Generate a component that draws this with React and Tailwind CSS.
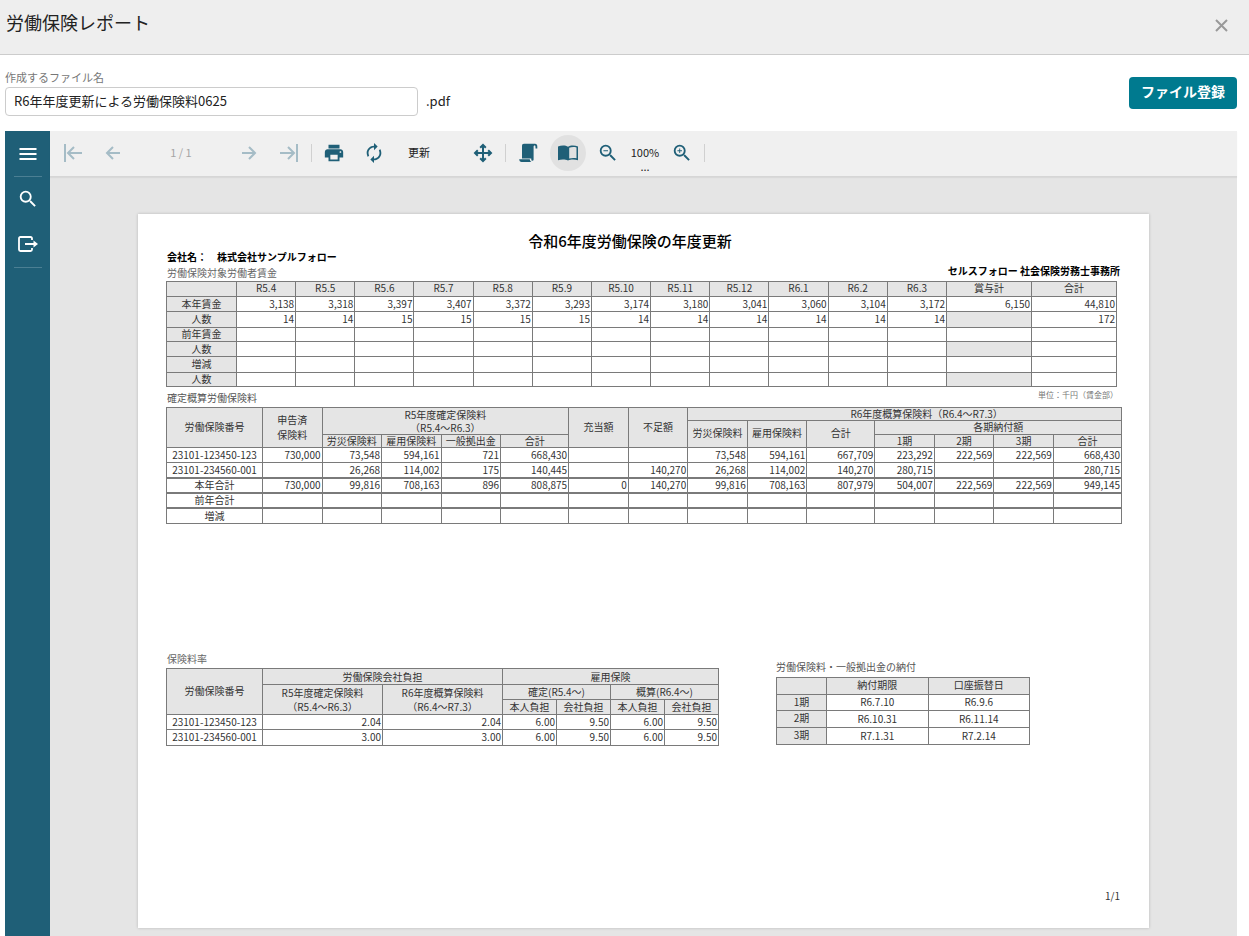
import { MdAutorenew, MdPrint, MdSearch, MdZoomIn, MdZoomOut } from "react-icons/md";

const months = ["R5.4", "R5.5", "R5.6", "R5.7", "R5.8", "R5.9", "R5.10", "R5.11", "R5.12", "R6.1", "R6.2", "R6.3"];

const wageRows = [
  {
    label: "本年賃金",
    height: "h-[15px]",
    values: ["3,138", "3,318", "3,397", "3,407", "3,372", "3,293", "3,174", "3,180", "3,041", "3,060", "3,104", "3,172", "6,150", "44,810"],
  },
  {
    label: "人数",
    height: "h-4",
    noBonus: true,
    values: ["14", "14", "15", "15", "15", "15", "14", "14", "14", "14", "14", "14", "", "172"],
  },
  { label: "前年賃金", height: "h-[14px]", values: Array(14).fill("") },
  { label: "人数", height: "h-[15px]", noBonus: true, values: Array(14).fill("") },
  { label: "増減", height: "h-4", values: Array(14).fill("") },
  { label: "人数", height: "h-[14px]", noBonus: true, values: Array(14).fill("") },
];

const premiumRows = [
  {
    label: "23101-123450-123",
    values: ["730,000", "73,548", "594,161", "721", "668,430", "", "", "73,548", "594,161", "667,709", "223,292", "222,569", "222,569", "668,430"],
  },
  {
    label: "23101-234560-001",
    thick: true,
    values: ["", "26,268", "114,002", "175", "140,445", "", "140,270", "26,268", "114,002", "140,270", "280,715", "", "", "280,715"],
  },
  {
    label: "本年合計",
    thick: true,
    values: ["730,000", "99,816", "708,163", "896", "808,875", "0", "140,270", "99,816", "708,163", "807,979", "504,007", "222,569", "222,569", "949,145"],
  },
  { label: "前年合計", thick: true, values: Array(14).fill("") },
  { label: "増減", values: Array(14).fill("") },
];

const rateRows = [
  { label: "23101-123450-123", height: "h-[15px]", values: ["2.04", "2.04", "6.00", "9.50", "6.00", "9.50"] },
  { label: "23101-234560-001", height: "h-4", values: ["3.00", "3.00", "6.00", "9.50", "6.00", "9.50"] },
];

const paymentRows = [
  { term: "1期", height: "h-4", due: "R6.7.10", debit: "R6.9.6" },
  { term: "2期", height: "h-[17px]", due: "R6.10.31", debit: "R6.11.14" },
  { term: "3期", height: "h-[17px]", due: "R7.1.31", debit: "R7.2.14" },
];

const StrokeIcon = ({ size, d, width = 2 }) => (
  <svg width={size} height={size} viewBox="0 0 20 20" fill="none" stroke="currentColor" strokeWidth={width}>
    <path d={d} />
  </svg>
);

const ScriptIcon = () => (
  <svg width="20" height="20" viewBox="0 0 20 20" fill="currentColor">
    <path d="M6 .8h11C18.500.8 19.300 2 19.300 3.400V5.500h-1.800V4c0-.9-.4-1.400-.9-1.400s-1 .5-1 1.400v12.600c0 .8-.5 1.200-1.100 1.200-.7 0-1.200-.5-1.200-1.300v-1.100H4V3C4 1.500 4.700.8 6 .8z" />
    <path d="M1.200 16.200h10.600c0 1.200.6 2.200 1.600 2.800H3.600c-1.400 0-2.400-1.200-2.400-2.800z" />
  </svg>
);

const BookIcon = () => (
  <svg width="20" height="16" viewBox="0 0 20 16" fill="currentColor">
    <path d="M0 1.500C3 .2 7.500 0 10 1.700V15.600C7.500 14.200 3 14.200 0 15.300z" />
    <path
      fillRule="evenodd"
      d="M10 1.700C12.500 0 17 .2 20 1.500V15.300c-3-1.100-7.500-1.100-10 .3zM11.200 2.700v10.900c2.200-.8 5.100-.8 7.300-.3V2.500c-2.200-.7-5.100-.6-7.300.2z"
    />
  </svg>
);

const ToolButton = ({ label, disabled, active, children }) => (
  <button
    type="button"
    aria-label={label}
    disabled={disabled}
    className={`flex size-9 shrink-0 items-center justify-center rounded-full ${
      disabled ? "text-[#a5bcc6]" : "text-[#1f5f77]"
    } ${active ? "bg-[#e1e1e1]" : ""}`}
  >
    {children}
  </button>
);

const Separator = () => <span className="h-[18px] w-px shrink-0 bg-[#d0d0d0]" />;

const Head = ({ className = "", ...props }) => (
  <th className={`border-r border-b border-[#7a7a7a] bg-[#e5e5e5] p-0 font-normal ${className}`} {...props} />
);

const Cell = ({ className = "", center, thick, ...props }) => (
  <td
    className={`border-r border-[#7a7a7a] p-0 pb-px ${center ? "text-center" : "pr-px text-right"} ${
      thick ? "border-b-2" : "border-b"
    } ${className}`}
    {...props}
  />
);

const Table = ({ className = "", ...props }) => (
  <table
    className={`table-fixed border-separate border-spacing-0 border-t border-l border-[#7a7a7a] leading-3 ${className}`}
    {...props}
  />
);

const WageTable = () => (
  <Table className="w-[951px]" aria-label="労働保険対象労働者賃金">
    <colgroup>
      <col className="w-[70px]" />
      <col span={12} />
      <col span={2} className="w-[85px]" />
    </colgroup>
    <thead>
      <tr className="h-[15px]">
        <Head />
        {months.map((month) => (
          <Head key={month} className="pb-0.5">
            {month}
          </Head>
        ))}
        <Head className="pb-0.5">賞与計</Head>
        <Head className="pb-0.5">合計</Head>
      </tr>
    </thead>
    <tbody>
      {wageRows.map((row, i) => (
        <tr key={i} className={row.height}>
          <Head scope="row" className="pb-px">
            {row.label}
          </Head>
          {row.values.map((value, j) => (
            <Cell key={j} className={row.noBonus && j === 12 ? "bg-[#e5e5e5]" : ""}>
              {value}
            </Cell>
          ))}
        </tr>
      ))}
    </tbody>
  </Table>
);

const PremiumTable = () => (
  <Table className="w-full" aria-label="確定概算労働保険料">
    <colgroup>
      <col className="w-24" />
      <col span={4} />
      <col className="w-[68px]" />
      <col span={4} />
      <col className="w-[68px]" />
      <col span={3} />
      <col className="w-[68px]" />
    </colgroup>
    <thead>
      <tr className="h-[13px]">
        <Head rowSpan={3} className="pb-0.5">
          労働保険番号
        </Head>
        <Head rowSpan={3} className="pb-0.5 leading-[15px]">
          申告済
          <br />
          保険料
        </Head>
        <Head rowSpan={2} colSpan={4} className="leading-[13px]">
          R5年度確定保険料
          <br />
          （R5.4～R6.3）
        </Head>
        <Head rowSpan={3} className="pb-0.5">
          充当額
        </Head>
        <Head rowSpan={3} className="pb-0.5">
          不足額
        </Head>
        <Head colSpan={7} className="pl-11">
          R6年度概算保険料（R6.4～R7.3）
        </Head>
      </tr>
      <tr className="h-[14px]">
        <Head rowSpan={2} className="pb-0.5">
          労災保険料
        </Head>
        <Head rowSpan={2} className="pb-0.5">
          雇用保険料
        </Head>
        <Head rowSpan={2} className="pb-0.5">
          合計
        </Head>
        <Head colSpan={4} className="pb-px">
          各期納付額
        </Head>
      </tr>
      <tr className="h-[13px]">
        <Head>労災保険料</Head>
        <Head>雇用保険料</Head>
        <Head>一般拠出金</Head>
        <Head>合計</Head>
        <Head>1期</Head>
        <Head>2期</Head>
        <Head>3期</Head>
        <Head>合計</Head>
      </tr>
    </thead>
    <tbody>
      {premiumRows.map((row, i) => (
        <tr key={row.label} className={i === 1 ? "h-4" : "h-[15px]"}>
          <Cell center thick={row.thick}>
            {row.label}
          </Cell>
          {row.values.map((value, j) => (
            <Cell key={j} thick={row.thick}>
              {value}
            </Cell>
          ))}
        </tr>
      ))}
    </tbody>
  </Table>
);

const RateTable = () => (
  <Table className="w-[553px]" aria-label="保険料率">
    <colgroup>
      <col className="w-24" />
      <col span={2} className="w-[120px]" />
      <col span={4} />
    </colgroup>
    <thead>
      <tr className="h-4">
        <Head rowSpan={3} className="pb-0.5">
          労働保険番号
        </Head>
        <Head colSpan={2}>労働保険会社負担</Head>
        <Head colSpan={4}>雇用保険</Head>
      </tr>
      <tr className="h-[15px]">
        <Head rowSpan={2} className="leading-[14px]">
          R5年度確定保険料
          <br />
          （R5.4～R6.3）
        </Head>
        <Head rowSpan={2} className="leading-[14px]">
          R6年度概算保険料
          <br />
          （R6.4～R7.3）
        </Head>
        <Head colSpan={2}>確定(R5.4～)</Head>
        <Head colSpan={2}>概算(R6.4～)</Head>
      </tr>
      <tr className="h-[15px]">
        <Head>本人負担</Head>
        <Head>会社負担</Head>
        <Head>本人負担</Head>
        <Head>会社負担</Head>
      </tr>
    </thead>
    <tbody>
      {rateRows.map((row) => (
        <tr key={row.label} className={row.height}>
          <Cell center>{row.label}</Cell>
          {row.values.map((value, j) => (
            <Cell key={j}>{value}</Cell>
          ))}
        </tr>
      ))}
    </tbody>
  </Table>
);

const PaymentTable = () => (
  <Table className="w-[254px]" aria-label="労働保険料・一般拠出金の納付">
    <colgroup>
      <col className="w-[50px]" />
      <col span={2} />
    </colgroup>
    <thead>
      <tr className="h-[17px]">
        <Head />
        <Head className="pb-0.5">納付期限</Head>
        <Head className="pb-0.5">口座振替日</Head>
      </tr>
    </thead>
    <tbody>
      {paymentRows.map((row) => (
        <tr key={row.term} className={row.height}>
          <Head scope="row" className="pb-0.5">
            {row.term}
          </Head>
          <Cell center>{row.due}</Cell>
          <Cell center>{row.debit}</Cell>
        </tr>
      ))}
    </tbody>
  </Table>
);

const ReportPage = () => (
  <article className="mx-auto flex min-h-[714px] w-[1011px] flex-col bg-white pt-[18px] pr-[27px] pb-6 pl-7 text-[10px] text-[#333] shadow-[0_0_3px_rgba(0,0,0,0.2)]">
    <h2 className="pr-7 text-center text-[15px] leading-[18px] font-medium text-black">令和6年度労働保険の年度更新</h2>
    <p className="pb-px pl-px leading-[14px] font-bold text-black">会社名：　株式会社サンプルフォロー</p>
    <div className="flex items-start justify-between pr-0.5 pl-px">
      <p className="leading-4 text-[#666]">労働保険対象労働者賃金</p>
      <p className="leading-3 font-bold text-black">セルスフォロー 社会保険労務士事務所</p>
    </div>
    <WageTable />

    <div className="flex h-5 items-center justify-between pl-px">
      <p className="text-[#555]">確定概算労働保険料</p>
      <p className="self-start pr-1 text-[8px] leading-4 text-[#777]">単位：千円（賃金部）</p>
    </div>
    <PremiumTable />

    <div className="mt-[126px] flex items-start gap-[57px]">
      <section>
        <p className="pl-px leading-[18px] text-[#666]">保険料率</p>
        <RateTable />
      </section>
      <section className="pt-[7px]">
        <p className="leading-5 text-[#555]">労働保険料・一般拠出金の納付</p>
        <PaymentTable />
      </section>
    </div>

    <p className="mt-auto pr-0.5 text-right leading-4">1/1</p>
  </article>
);

const Toolbar = () => (
  <div
    role="toolbar"
    aria-label="レポート操作"
    className="flex h-[46px] shrink-0 items-center gap-1 border-b border-[#d6d6d6] bg-[#f0f0f0] pb-0.5 pl-[5px] text-[11px] text-[#222] shadow-[0_1px_1px_rgba(0,0,0,0.05)]"
  >
    <ToolButton label="最初のページ" disabled>
      <StrokeIcon size={20} d="M2 1v18M19 10H5M11 4l-6 6 6 6" />
    </ToolButton>
    <ToolButton label="前のページ" disabled>
      <StrokeIcon size={20} d="M17 10H4M10 4l-6 6 6 6" />
    </ToolButton>
    <span className="w-[92px] text-center text-[#a5a5a5]">1 / 1</span>
    <ToolButton label="次のページ" disabled>
      <StrokeIcon size={20} d="M3 10h13M10 4l6 6-6 6" />
    </ToolButton>
    <ToolButton label="最後のページ" disabled>
      <StrokeIcon size={20} d="M18 1v18M1 10h14M9 4l6 6-6 6" />
    </ToolButton>
    <Separator />
    <ToolButton label="印刷">
      <MdPrint size={22} />
    </ToolButton>
    <ToolButton label="再読み込み">
      <MdAutorenew size={22} />
    </ToolButton>
    <button type="button" className="w-[65px] px-3 text-left">
      更新
    </button>
    <ToolButton label="移動">
      <StrokeIcon
        size={20}
        d="M10 2v16M2 10h16M7.200 4.800L10 2l2.800 2.800M7.200 15.200L10 18l2.800-2.800M4.800 7.200L2 10l2.800 2.800M15.200 7.200L18 10l-2.800 2.800"
      />
    </ToolButton>
    <Separator />
    <ToolButton label="連続表示">
      <ScriptIcon />
    </ToolButton>
    <ToolButton label="ページ表示" active>
      <BookIcon />
    </ToolButton>
    <ToolButton label="縮小">
      <MdZoomOut size={22} />
    </ToolButton>
    <button type="button" className="flex w-[30px] flex-col items-center pt-3 leading-[14px]">
      <span>100%</span>
      <span>...</span>
    </button>
    <ToolButton label="拡大">
      <MdZoomIn size={22} />
    </ToolButton>
    <Separator />
  </div>
);

const SideMenu = () => (
  <nav className="flex w-[45px] shrink-0 flex-col items-center bg-[#1f5f77] text-white">
    <button type="button" aria-label="メニュー" className="flex h-[45px] w-full items-center justify-center">
      <StrokeIcon size={20} d="M1.500 5h17M1.500 10h17M1.500 15h17" />
    </button>
    <span className="h-px w-7 bg-[#4b7f93]" />
    <button type="button" aria-label="検索" className="flex h-[45px] w-full items-center justify-center pb-0.5">
      <MdSearch size={22} />
    </button>
    <button type="button" aria-label="エクスポート" className="flex h-[45px] w-full items-center justify-center pb-0.5">
      <svg width="20" height="20" viewBox="0 0 20 20" fill="none" stroke="currentColor" strokeWidth="1.800">
        <path d="M14 6V4.500Q14 3 12.500 3h-10Q1 3 1 4.500v11Q1 17 2.500 17h10q1.500 0 1.500-1.500V14M7 10h9" />
        <path d="M15.500 6.500L20 10l-4.500 3.500z" fill="currentColor" stroke="none" />
      </svg>
    </button>
    <span className="h-px w-7 bg-[#4b7f93]" />
  </nav>
);

export default function App() {
  return (
    <div
      lang="ja"
      className="flex min-h-screen flex-col bg-white font-['Noto_Sans_CJK_JP','Noto_Sans',sans-serif] text-[#222]"
    >
      <header className="flex h-[55px] shrink-0 items-center justify-between border-b border-[#ccc] bg-[#eee] pr-5 pl-[6px]">
        <h1 className="pb-2.5 text-lg">労働保険レポート</h1>
        <button type="button" aria-label="閉じる" className="pb-1 text-[#999]">
          <svg width="15" height="15" viewBox="0 0 15 15" fill="none" stroke="currentColor" strokeWidth="2">
            <path d="M2 2l11 11M13 2L2 13" />
          </svg>
        </button>
      </header>

      <main className="flex flex-1 flex-col pr-3 pl-[5px]">
        <div className="flex items-start justify-between pt-3.5 pb-[15px]">
          <div>
            <label htmlFor="file-name" className="block pb-0.5 text-[11px] leading-4 text-[#777]">
              作成するファイル名
            </label>
            <div className="flex items-center gap-2 text-[13px]">
              <input
                id="file-name"
                type="text"
                defaultValue="R6年年度更新による労働保険料0625"
                className="h-[29px] w-[413px] rounded-sm border border-[#ccc] bg-white px-2 pb-0.5"
              />
              <span className="pb-0.5">.pdf</span>
            </div>
          </div>
          <button
            type="button"
            className="mt-2 h-8 rounded-sm bg-[#007a8f] px-3 pb-1 text-sm font-bold text-white"
          >
            ファイル登録
          </button>
        </div>

        <div className="flex flex-1">
          <SideMenu />
          <div className="flex min-w-0 flex-1 flex-col bg-[#e5e5e5]">
            <Toolbar />
            <div className="flex-1 overflow-auto pt-[37px] pb-2">
              <ReportPage />
            </div>
          </div>
        </div>
      </main>
    </div>
  );
}
